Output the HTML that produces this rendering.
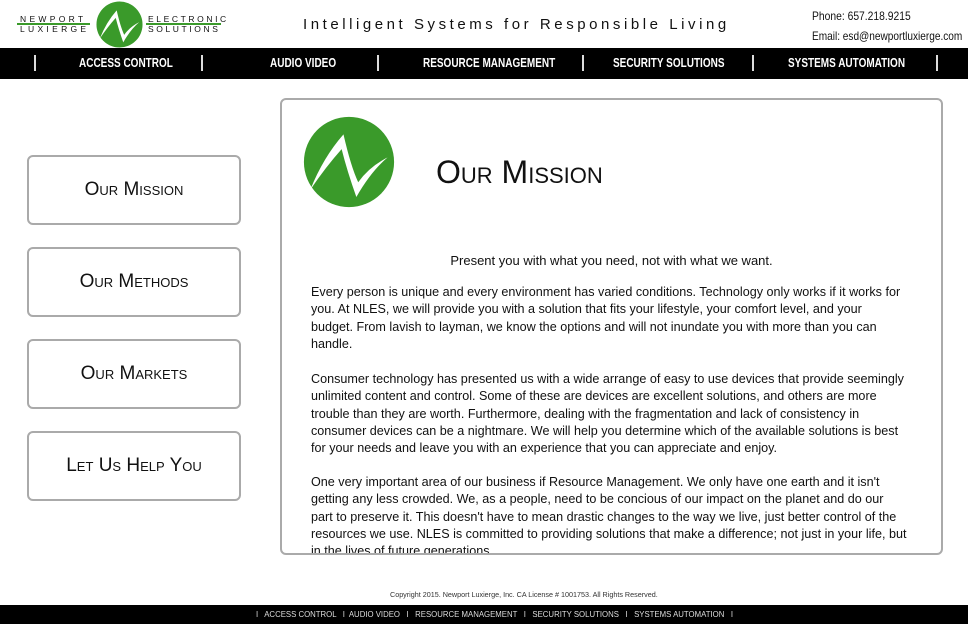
<!DOCTYPE html>
<html><head><meta charset="utf-8"><style>
*{margin:0;padding:0;box-sizing:border-box}
body{width:968px;height:624px;background:#fff;font-family:"Liberation Sans",sans-serif;position:relative;overflow:hidden;color:#111}
.abs{position:absolute}
.nav{top:48px;left:0;width:968px;height:31px;background:#000;color:#fff}
.nav span{position:absolute;top:8px;font-weight:bold;font-size:12.5px;transform:scaleX(.8);transform-origin:left;white-space:nowrap}
.nav i{position:absolute;top:7px;width:2px;height:16px;background:#ddd}
.side{left:27px;width:214px;height:70px;border:2px solid #aaa;border-radius:6px;display:flex;align-items:center;justify-content:center;font-size:19px;font-variant:small-caps;color:#111}
.main{left:280px;top:98px;width:663px;height:457px;border:2px solid #aaa;border-radius:6px;overflow:hidden}
.main p{position:absolute;left:29px;white-space:nowrap;font-size:12.6px;line-height:17.3px}
</style></head><body>
<div class="abs" style="left:20px;top:14px;font-size:8.5px;letter-spacing:3.3px;line-height:10px">NEWPORT<br>LUXIERGE</div>
<div class="abs" style="left:17px;top:23px;width:73px;height:2px;background:#3a9a2a"></div>
<div class="abs" style="left:148px;top:14px;font-size:8.5px;letter-spacing:2.6px;line-height:10px">ELECTRONIC<br>SOLUTIONS</div>
<div class="abs" style="left:146px;top:23px;width:75px;height:2px;background:#3a9a2a"></div>
<svg class="abs" style="left:96px;top:1px" width="47" height="47" viewBox="0 0 100 100"><circle cx="50" cy="50" r="49" fill="#3a9a2a"/><path d="M8 80 Q22 45 44 20 Q52 55 60 72 Q72 55 92 45 Q74 60 58 88 Q48 60 42 36 Q25 55 8 80Z" fill="#fff"/></svg>
<div class="abs" style="left:303px;top:16px;font-size:15px;letter-spacing:3.55px;white-space:nowrap">Intelligent Systems for Responsible Living</div>
<div class="abs" style="left:812px;top:9px;font-size:12px;transform:scaleX(.86);transform-origin:left;white-space:nowrap">Phone: 657.218.9215</div>
<div class="abs" style="left:812px;top:29px;font-size:12px;transform:scaleX(.84);transform-origin:left;white-space:nowrap">Email: esd@newportluxierge.com</div>
<div class="abs nav">
<i style="left:34px"></i><span style="left:79px">ACCESS CONTROL</span>
<i style="left:201px"></i><span style="left:270px">AUDIO VIDEO</span>
<i style="left:377px"></i><span style="left:423px">RESOURCE MANAGEMENT</span>
<i style="left:582px"></i><span style="left:613px">SECURITY SOLUTIONS</span>
<i style="left:752px"></i><span style="left:788px">SYSTEMS AUTOMATION</span>
<i style="left:936px"></i>
</div>
<div class="abs side" style="top:155px">Our Mission</div>
<div class="abs side" style="top:247px">Our Methods</div>
<div class="abs side" style="top:339px">Our Markets</div>
<div class="abs side" style="top:431px">Let Us Help You</div>
<div class="abs main">
<svg class="abs" style="left:21px;top:16px" width="92" height="92" viewBox="0 0 100 100"><circle cx="50" cy="50" r="49" fill="#3a9a2a"/><path d="M8 80 Q22 45 44 20 Q52 55 60 72 Q72 55 92 45 Q74 60 58 88 Q48 60 42 36 Q25 55 8 80Z" fill="#fff"/></svg>
<div class="abs" style="left:154px;top:54px;font-size:32px;font-variant:small-caps">Our Mission</div>
<div class="abs" style="left:0;width:659px;top:153px;text-align:center;font-size:13px">Present you with what you need, not with what we want.</div>
<p style="top:184px">Every person is unique and every environment has varied conditions. Technology only works if it works for<br>you. At NLES, we will provide you with a solution that fits your lifestyle, your comfort level, and your<br>budget. From lavish to layman, we know the options and will not inundate you with more than you can<br>handle.</p>
<p style="top:271px">Consumer technology has presented us with a wide arrange of easy to use devices that provide seemingly<br>unlimited content and control. Some of these are devices are excellent solutions, and others are more<br>trouble than they are worth. Furthermore, dealing with the fragmentation and lack of consistency in<br>consumer devices can be a nightmare. We will help you determine which of the available solutions is best<br>for your needs and leave you with an experience that you can appreciate and enjoy.</p>
<p style="top:374px">One very important area of our business if Resource Management. We only have one earth and it isn't<br>getting any less crowded. We, as a people, need to be concious of our impact on the planet and do our<br>part to preserve it. This doesn't have to mean drastic changes to the way we live, just better control of the<br>resources we use. NLES is committed to providing solutions that make a difference; not just in your life, but<br>in the lives of future generations.</p>
</div>
<div class="abs" style="left:390px;top:590px;font-size:7.2px;color:#333;white-space:nowrap">Copyright 2015. Newport Luxierge, Inc. CA License # 1001753. All Rights Reserved.</div>
<div class="abs" style="left:0;top:605px;width:968px;height:19px;background:#000"></div>
<div class="abs" style="left:256px;top:605px;color:#ddd;font-size:7.8px;line-height:19px;white-space:pre">I   ACCESS CONTROL   I  AUDIO VIDEO   I   RESOURCE MANAGEMENT   I   SECURITY SOLUTIONS   I   SYSTEMS AUTOMATION   I</div>
</body></html>
